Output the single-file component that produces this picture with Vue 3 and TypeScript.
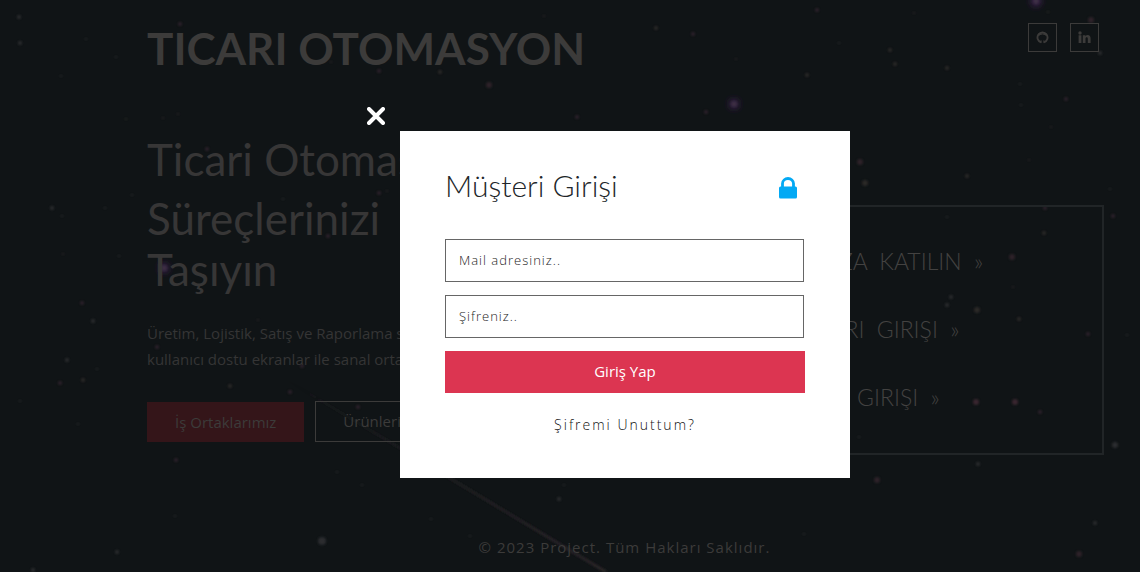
<script setup lang="ts">
import { ref } from 'vue'

interface Star {
  x: number
  y: number
  r: number
  tint: string
}

const GREY = '#3d3d40'
const ROSE = '#3f2c36'
const SAND = '#3d3833'

const stars: Star[] = [
  { x: 19, y: 17, r: 2, tint: GREY }, { x: 20, y: 43, r: 2, tint: GREY },
  { x: 86, y: 39, r: 1, tint: GREY }, { x: 116, y: 57, r: 1, tint: GREY },
  { x: 180, y: 24, r: 2, tint: ROSE }, { x: 61, y: 76, r: 1, tint: GREY },
  { x: 126, y: 119, r: 1, tint: SAND }, { x: 163, y: 118, r: 1, tint: ROSE },
  { x: 178, y: 114, r: 1, tint: ROSE }, { x: 52, y: 208, r: 2, tint: GREY },
  { x: 62, y: 216, r: 1, tint: GREY }, { x: 105, y: 208, r: 1, tint: GREY },
  { x: 132, y: 195, r: 1, tint: GREY }, { x: 119, y: 256, r: 1, tint: GREY },
  { x: 63, y: 254, r: 1, tint: ROSE }, { x: 207, y: 149, r: 2, tint: ROSE },
  { x: 283, y: 199, r: 1, tint: GREY }, { x: 328, y: 236, r: 2, tint: ROSE },
  { x: 379, y: 193, r: 2, tint: ROSE }, { x: 387, y: 191, r: 1, tint: ROSE },
  { x: 379, y: 71, r: 2, tint: ROSE }, { x: 331, y: 62, r: 1, tint: ROSE },
  { x: 82, y: 303, r: 2, tint: ROSE }, { x: 93, y: 321, r: 2, tint: GREY },
  { x: 67, y: 360, r: 2, tint: GREY }, { x: 83, y: 380, r: 2, tint: SAND },
  { x: 60, y: 383, r: 2, tint: ROSE }, { x: 20, y: 401, r: 1, tint: GREY },
  { x: 78, y: 424, r: 1, tint: GREY }, { x: 97, y: 369, r: 1, tint: GREY },
  { x: 157, y: 347, r: 2, tint: ROSE }, { x: 258, y: 320, r: 1, tint: ROSE },
  { x: 230, y: 386, r: 2, tint: SAND }, { x: 290, y: 392, r: 2, tint: ROSE },
  { x: 302, y: 366, r: 2, tint: ROSE }, { x: 358, y: 407, r: 2, tint: ROSE },
  { x: 176, y: 460, r: 2, tint: ROSE }, { x: 337, y: 472, r: 1, tint: GREY },
  { x: 362, y: 485, r: 1, tint: GREY }, { x: 175, y: 516, r: 1, tint: GREY },
  { x: 117, y: 552, r: 2, tint: GREY }, { x: 33, y: 570, r: 2, tint: GREY },
  { x: 322, y: 541, r: 4, tint: GREY }, { x: 440, y: 72, r: 2, tint: SAND },
  { x: 489, y: 85, r: 3, tint: ROSE }, { x: 544, y: 16, r: 1, tint: ROSE },
  { x: 577, y: 117, r: 2, tint: ROSE }, { x: 656, y: 28, r: 2, tint: SAND },
  { x: 693, y: 34, r: 2, tint: ROSE }, { x: 736, y: 59, r: 1, tint: ROSE },
  { x: 706, y: 112, r: 2, tint: ROSE }, { x: 817, y: 10, r: 2, tint: ROSE },
  { x: 807, y: 75, r: 2, tint: SAND }, { x: 890, y: 50, r: 2, tint: SAND },
  { x: 895, y: 64, r: 2, tint: SAND }, { x: 839, y: 43, r: 1, tint: GREY },
  { x: 947, y: 68, r: 2, tint: SAND }, { x: 914, y: 13, r: 1, tint: ROSE },
  { x: 1020, y: 84, r: 1, tint: GREY }, { x: 1021, y: 105, r: 1, tint: GREY },
  { x: 1066, y: 99, r: 2, tint: ROSE }, { x: 1091, y: 20, r: 3, tint: ROSE },
  { x: 1100, y: 53, r: 2, tint: GREY }, { x: 1048, y: 12, r: 1, tint: SAND },
  { x: 1051, y: 127, r: 1, tint: ROSE }, { x: 860, y: 162, r: 3, tint: ROSE },
  { x: 865, y: 183, r: 3, tint: SAND }, { x: 967, y: 176, r: 2, tint: SAND },
  { x: 1029, y: 160, r: 1, tint: ROSE }, { x: 1110, y: 189, r: 1, tint: GREY },
  { x: 1045, y: 208, r: 2, tint: ROSE }, { x: 1113, y: 216, r: 2, tint: ROSE },
  { x: 947, y: 217, r: 1, tint: GREY }, { x: 1044, y: 233, r: 2, tint: SAND },
  { x: 1012, y: 257, r: 3, tint: ROSE }, { x: 1013, y: 287, r: 1, tint: ROSE },
  { x: 951, y: 297, r: 2, tint: GREY }, { x: 947, y: 305, r: 2, tint: GREY },
  { x: 977, y: 310, r: 3, tint: SAND }, { x: 1019, y: 319, r: 2, tint: SAND },
  { x: 1088, y: 334, r: 2, tint: ROSE }, { x: 1127, y: 335, r: 1, tint: GREY },
  { x: 976, y: 402, r: 3, tint: '#55303f' }, { x: 1015, y: 402, r: 3, tint: '#55303f' },
  { x: 1040, y: 412, r: 2, tint: ROSE }, { x: 1115, y: 445, r: 3, tint: GREY },
  { x: 978, y: 464, r: 2, tint: GREY }, { x: 877, y: 480, r: 3, tint: ROSE },
  { x: 859, y: 437, r: 1, tint: GREY }, { x: 1095, y: 523, r: 2, tint: GREY },
  { x: 1079, y: 554, r: 3, tint: ROSE }, { x: 564, y: 485, r: 1, tint: GREY },
  { x: 559, y: 499, r: 2, tint: GREY }, { x: 431, y: 519, r: 1, tint: GREY },
  { x: 804, y: 534, r: 1, tint: GREY }, { x: 470, y: 536, r: 1, tint: GREY },
]

const nebulae: Star[] = [
  { x: 164, y: 268, r: 8, tint: '#3c2050' },
  { x: 734, y: 104, r: 8, tint: '#3c2050' },
  { x: 1036, y: 1, r: 9, tint: '#3c2050' },
]

const entries: string[] = ['ARAMIZA KATILIN', 'MÜŞTERI GIRIŞI', 'ADMIN GIRIŞI']

const open = ref(true)
const email = ref('')
const password = ref('')
</script>

<template>
  <div class="page">
    <svg class="sky" viewBox="0 0 1140 572" preserveAspectRatio="xMidYMid slice" aria-hidden="true">
      <defs>
        <filter id="soft" x="-50%" y="-50%" width="200%" height="200%">
          <feGaussianBlur stdDeviation="1" />
        </filter>
        <filter id="glow" x="-100%" y="-100%" width="300%" height="300%">
          <feGaussianBlur stdDeviation="3" />
        </filter>
        <linearGradient id="trail" gradientUnits="userSpaceOnUse" x1="280" y1="376" x2="606" y2="572">
          <stop offset="0" stop-color="#2a2529" stop-opacity="0" />
          <stop offset="1" stop-color="#2a2529" />
        </linearGradient>
      </defs>
      <path d="M280 376 L606 572" stroke="url(#trail)" stroke-width="3" filter="url(#soft)" />
      <g filter="url(#glow)">
        <circle v-for="n in nebulae" :key="n.x" :cx="n.x" :cy="n.y" :r="n.r * 0.6" :fill="n.tint" />
      </g>
      <g class="stars" filter="url(#soft)">
        <circle v-for="n in nebulae" :key="n.x" :cx="n.x" :cy="n.y" r="3" fill="#463a4a" />
        <circle v-for="s in stars" :key="`${s.x}-${s.y}`" :cx="s.x" :cy="s.y" :r="s.r" :fill="s.tint" />
      </g>
    </svg>

    <header class="top">
      <h1 class="brand">TICARI OTOMASYON</h1>
      <nav class="social">
        <a href="#" aria-label="GitHub">
          <svg viewBox="0 0 14 14" width="13" height="13" fill="none" stroke="currentColor">
            <path d="M5.500 12.200A5.400 5.400 0 1 1 8.500 12.200" stroke-width="2" />
            <path d="M3 2.500L3.500 5M11 2.500L10.500 5M3.500 4Q7 2.500 10.500 4M5.500 10v3M8.500 10v3M3 10q1 1.500 2.500 1.300" stroke-width="1" />
          </svg>
        </a>
        <a href="#" aria-label="LinkedIn">
          <svg viewBox="0 0 13 13" width="13" height="13" fill="currentColor">
            <circle cx="2" cy="2" r="1.700" />
            <path d="M.6 4.300h2.800V12H.6zM4.800 4.300h2.700v1c.5-.8 1.200-1.200 2.200-1.200 1.900 0 2.900 1.200 2.900 3.400V12H9.800V8c0-1.100-.3-1.700-1.100-1.700-.8 0-1.200.6-1.200 1.700v4H4.800z" />
          </svg>
        </a>
      </nav>
    </header>

    <main class="main">
      <section class="intro">
        <h2 class="lead">Ticari Otomasyon</h2>
        <h2 class="headline">Süreçlerinizi<br>Taşıyın</h2>
        <p class="copy">Üretim, Lojistik, Satış ve Raporlama süreçleri<br>kullanıcı dostu ekranlar ile sanal ortamda</p>
        <div class="actions">
          <a class="btn filled" href="#">İş Ortaklarımız</a>
          <a class="btn outlined" href="#">Ürünlerimiz</a>
        </div>
      </section>
      <nav class="entries">
        <a v-for="entry in entries" :key="entry" href="#">{{ entry }} <span>»</span></a>
      </nav>
    </main>

    <footer class="foot">© 2023 Project. Tüm Hakları Saklıdır.</footer>

    <div v-if="open" class="overlay">
      <div class="dialog" role="dialog" aria-labelledby="dialog-title">
        <button class="close" type="button" aria-label="Kapat" @click="open = false">
          <svg viewBox="0 0 18 18" width="18" height="18">
            <path d="M2 2 L16 16 M16 2 L2 16" stroke="currentColor" stroke-width="4" stroke-linecap="round" />
          </svg>
        </button>
        <div class="dialog-head">
          <h3 id="dialog-title">Müşteri Girişi</h3>
          <svg class="lock" viewBox="0 0 18 22" width="18" height="22" aria-hidden="true">
            <path d="M3.500 11V6.500a5.500 5 0 0 1 11 0V11" fill="none" stroke="currentColor" stroke-width="2.800" />
            <rect x="0" y="9.500" width="18" height="12" rx="1.500" fill="currentColor" />
          </svg>
        </div>
        <form class="form" @submit.prevent>
          <input v-model="email" type="email" placeholder="Mail adresiniz.." aria-label="Mail adresiniz..">
          <input v-model="password" type="password" placeholder="Şifreniz.." aria-label="Şifreniz..">
          <button class="submit" type="submit">Giriş Yap</button>
        </form>
        <a class="forgot" href="#">Şifremi Unuttum?</a>
      </div>
    </div>
  </div>
</template>

<style>
body {
  margin: 0;
  background: #101416;
}
</style>

<style scoped>
.page {
  position: relative;
  box-sizing: border-box;
  min-height: 100vh;
  display: flex;
  flex-direction: column;
  padding: 19px 36px 13px 147px;
  overflow: hidden;
  background: #101416;
  color: #3c3b3a;
  font-family: Lato, "Open Sans", sans-serif;
}

a {
  color: inherit;
  text-decoration: none;
}

h1,
h2,
h3,
p {
  margin: 0;
}

.sky {
  position: absolute;
  inset: 0;
  width: 100%;
  height: 100%;
}

.stars {
  opacity: 0.6;
}

.top,
.main,
.foot {
  position: relative;
}

.top {
  display: flex;
  justify-content: space-between;
  align-items: flex-start;
}

.brand {
  font-size: 44px;
  line-height: 58px;
  font-weight: 700;
}

.social {
  display: flex;
  gap: 13px;
  padding: 4px 5px 0 0;
}

.social a {
  box-sizing: border-box;
  width: 29px;
  height: 29px;
  display: grid;
  place-items: center;
  border: 1px solid currentColor;
}

.main {
  display: flex;
  justify-content: space-between;
  align-items: flex-start;
  padding-top: 57px;
}

.lead,
.headline {
  font-size: 44px;
  line-height: 51px;
  font-weight: 400;
  color: #373636;
}

.headline {
  padding-top: 8px;
}

.copy {
  padding-top: 25px;
  font-family: "Open Sans", sans-serif;
  font-size: 15px;
  line-height: 26px;
  white-space: nowrap;
  color: #353535;
}

.actions {
  display: flex;
  align-items: flex-end;
  gap: 11px;
  padding-top: 29px;
}

.btn {
  padding: 0 28px;
  font-family: "Open Sans", sans-serif;
  font-size: 15px;
  line-height: 40px;
}

.filled {
  background: #341519;
}

.outlined {
  padding: 0 27px;
  line-height: 39px;
  border: 1px solid currentColor;
}

.entries {
  box-sizing: border-box;
  width: 392px;
  margin-top: 71px;
  padding: 20px 0 22px 54px;
  display: flex;
  flex-direction: column;
  border: 2px solid #212527;
  font-size: 23px;
  line-height: 68px;
  font-weight: 300;
  word-spacing: 6px;
  color: #434241;
}

.foot {
  margin-top: auto;
  padding-right: 2px;
  text-align: center;
  font-family: "Open Sans", sans-serif;
  font-size: 15px;
  line-height: 24px;
  letter-spacing: 1px;
}

.overlay {
  position: absolute;
  inset: 0;
  display: flex;
  justify-content: center;
  align-items: flex-start;
  padding: 131px 0 0 110px;
}

.dialog {
  position: relative;
  box-sizing: border-box;
  width: 450px;
  padding: 32px 45px 40px;
  display: flex;
  flex-direction: column;
  background: #fff;
}

.close {
  position: absolute;
  top: -24px;
  left: -33px;
  padding: 0;
  border: 0;
  background: none;
  color: #fff;
  line-height: 0;
}

.dialog-head {
  display: flex;
  justify-content: space-between;
  align-items: center;
  padding-right: 8px;
}

.dialog-head h3 {
  font-size: 30px;
  line-height: 44px;
  font-weight: 300;
  color: #212529;
}

.lock {
  margin-top: 6px;
  color: #03a9f4;
}

.form {
  display: flex;
  flex-direction: column;
  gap: 13px;
  padding-top: 32px;
}

.form input {
  box-sizing: border-box;
  height: 43px;
  margin-right: 1px;
  padding: 0 13px 2px;
  border: 1px solid #666;
  border-radius: 0;
  background: #fff;
  color: #333;
  font: 300 13px "Open Sans", sans-serif;
  letter-spacing: 1px;
}

.form input::placeholder {
  color: #222;
  opacity: 1;
}

.submit {
  height: 42px;
  padding: 0 0 2px;
  border: 0;
  background: #dc3551;
  color: #fff;
  font: 15px "Open Sans", sans-serif;
}

.forgot {
  margin-top: 19px;
  text-align: center;
  font-family: "Open Sans", sans-serif;
  font-size: 14px;
  line-height: 26px;
  font-weight: 300;
  letter-spacing: 2px;
  color: #111;
}
</style>
